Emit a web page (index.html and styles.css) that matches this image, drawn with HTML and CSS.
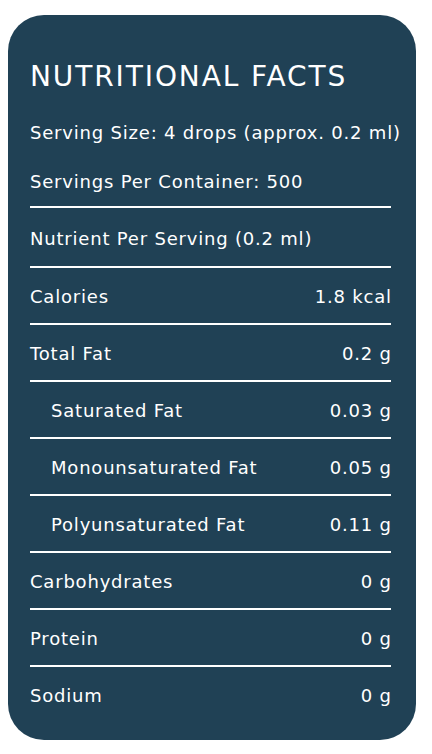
FILE: index.html
```html
<!DOCTYPE html>
<html lang="en">
<head>
  <meta charset="UTF-8">
  <title>Nutritional Facts</title>
  <link rel="stylesheet" href="styles.css">
</head>
<body>

  <!-- Nutrition card -->
  <div class="facts">
    <h2>NUTRITIONAL FACTS</h2>
    <p class="meta">Serving Size: 4 drops (approx. 0.2 ml)</p>
    <p class="meta">Servings Per Container: 500</p>

    <div class="row head"><span>Nutrient Per Serving (0.2 ml)</span></div>
    <div class="row"><span>Calories</span><span>1.8 kcal</span></div>
    <div class="row"><span>Total Fat</span><span>0.2 g</span></div>
    <div class="row sub"><span>Saturated Fat</span><span>0.03 g</span></div>
    <div class="row sub"><span>Monounsaturated Fat</span><span>0.05 g</span></div>
    <div class="row sub"><span>Polyunsaturated Fat</span><span>0.11 g</span></div>
    <div class="row"><span>Carbohydrates</span><span>0 g</span></div>
    <div class="row"><span>Protein</span><span>0 g</span></div>
    <div class="row"><span>Sodium</span><span>0 g</span></div>
  </div>

</body>
</html>
```

FILE: styles.css
```css
body {
  margin: 0;
  background: #fff;
  font-family: 'DejaVu Sans', 'Open Sans', sans-serif;
  color: #fff;
}

.facts {
  background: #204155;
  margin: 15px 16px 14px 8px;
  padding: 45px 25px 18px 22px;
  border-radius: 36px;
}

.facts h2 {
  margin: 0 0 27px;
  font-size: 28px;
  line-height: 34px;
  font-weight: normal;
  letter-spacing: 1.9px;
}

.meta {
  margin: 0;
  font-size: 18px;
  line-height: 23px;
  letter-spacing: 0.8px;
  white-space: nowrap;
}

.meta + .meta {
  margin-top: 26px;
  margin-bottom: 13px;
}

.row {
  display: flex;
  justify-content: space-between;
  border-top: 2px solid #fff;
  padding: 17px 0 15px;
  font-size: 18px;
  line-height: 23px;
  letter-spacing: 0.8px;
}

.row span:last-child {
  margin-right: -0.8px;
}

.row.head {
  padding: 19px 0 16px;
}

.row.sub {
  padding-left: 21px;
}
```
